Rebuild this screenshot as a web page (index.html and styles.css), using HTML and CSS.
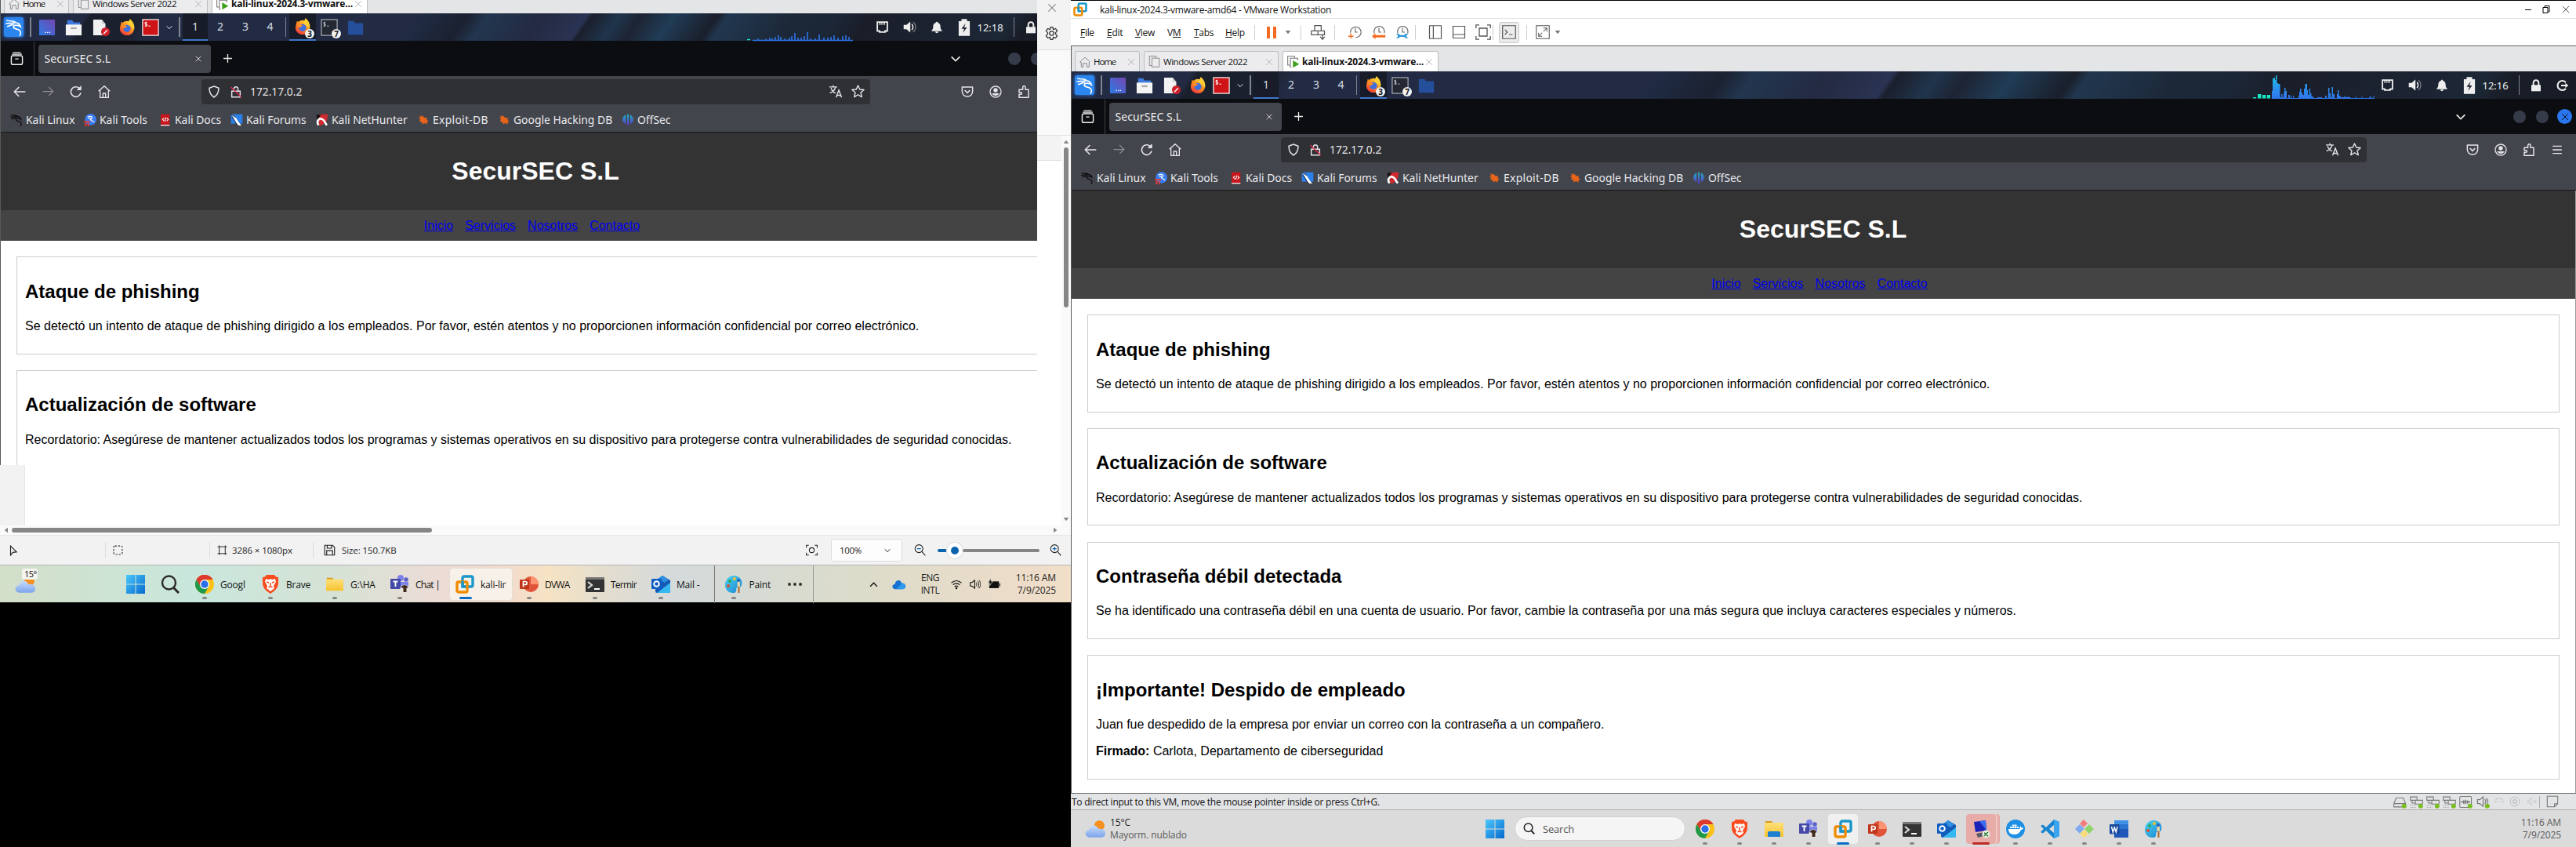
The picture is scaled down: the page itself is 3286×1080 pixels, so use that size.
FILE: index.html
```html
<!DOCTYPE html>
<html lang="es">
<head>
<meta charset="utf-8">
<title>SecurSEC S.L</title>
<link rel="stylesheet" href="styles.css">
</head>
<body>
<svg class="defs" width="0" height="0">
  <defs>
    <linearGradient id="gBlue" x1="0" y1="0" x2="1" y2="1"><stop offset="0" stop-color="#4cc8fb"/><stop offset="1" stop-color="#0669cf"/></linearGradient>
    <linearGradient id="gDesk" x1="0" y1="1" x2="1" y2="0"><stop offset="0" stop-color="#2c7be5"/><stop offset="1" stop-color="#7446b0"/></linearGradient>
    <linearGradient id="gFox" x1="0.8" y1="0" x2="0.2" y2="1"><stop offset="0" stop-color="#ffd93b"/><stop offset=".5" stop-color="#ff8a1e"/><stop offset="1" stop-color="#f0303f"/></linearGradient>
    <linearGradient id="gLoad" x1="0" y1="0" x2="0" y2="35" gradientUnits="userSpaceOnUse"><stop offset="0" stop-color="#17d0e0"/><stop offset=".6" stop-color="#2a93f0"/><stop offset="1" stop-color="#2f74e8"/></linearGradient>
    <linearGradient id="gOff" x1="0" y1="0" x2="0" y2="1"><stop offset="0" stop-color="#1fb0c4"/><stop offset="1" stop-color="#5b33c9"/></linearGradient>
    <linearGradient id="gCloud" x1="0" y1="0" x2="0" y2="1"><stop offset="0" stop-color="#c9dcfb"/><stop offset="1" stop-color="#7ba4ec"/></linearGradient>
    <linearGradient id="gFold" x1="0" y1="0" x2="0" y2="1"><stop offset="0" stop-color="#ffe07a"/><stop offset="1" stop-color="#f7c22e"/></linearGradient>
    <linearGradient id="gPal" x1="0" y1="0" x2="1" y2="1"><stop offset="0" stop-color="#4fd3f3"/><stop offset="1" stop-color="#1583cf"/></linearGradient>
  </defs>
  <symbol id="dragon" viewBox="0 0 24 24"><path d="M2 2.500c4 1 7 0 11 1.500M1 6.500c4 0 7-1 11-.5M3 10.500c3-1 5-2.500 8-2.500M12 5c5 0 8 2 9 6-4-3-10-3-10 .5 0 3.500 7 1.500 9.500 5.500 1 2 .5 4-.5 6" fill="none" stroke="currentColor" stroke-width="1.800" stroke-linecap="round"/></symbol>
  <symbol id="desk" viewBox="0 0 24 24"><rect x="1" y="1" width="22" height="22" rx="1" fill="url(#gDesk)"/><path d="M9 19h1.500M12 19h1.500M15 19h1.500" stroke="#fff" stroke-width="1.500"/></symbol>
  <symbol id="files" viewBox="0 0 24 24"><path d="M3 2h7l2 3h9v7H3z" fill="#3f7ae0"/><path d="M1 8h22v15H1z" fill="#f4f4f4"/><path d="M8 13h8" stroke="#aaa" stroke-width="2.500"/></symbol>
  <symbol id="doc" viewBox="0 0 24 24"><path d="M1 1h12l5 6v16H1z" fill="#f2f2f2"/><path d="M13 1l5 6h-5z" fill="#ccc"/><circle cx="18" cy="18" r="6" fill="#d0202a"/><path d="M15.500 21l5-5.500" stroke="#fff" stroke-width="1.500"/></symbol>
  <symbol id="fox" viewBox="0 0 24 24"><circle cx="12" cy="13" r="10" fill="url(#gFox)"/><path d="M13 7l3-7c5 4 7 9 6 15l-5-5z" fill="#ffcf35"/><path d="M3 10l1-6 5 4z" fill="#ff8a1e"/><circle cx="12" cy="13.500" r="5" fill="#3c6fe0"/><path d="M4 10c3-2 6-1 9 1-3 0-3 3-6 2z" fill="#ff8a2a"/></symbol>
  <symbol id="rterm" viewBox="0 0 24 24"><rect x="1" y="1" width="22" height="22" fill="#cf1417" stroke="#eee" stroke-width="1.400"/><path d="M7 5H4.500v2.500H7V10H4M5.700 4v7M9 10h3" stroke="#fff" fill="none"/></symbol>
  <symbol id="bterm" viewBox="0 0 24 24"><rect x="1" y="1" width="22" height="22" fill="#232832" stroke="#b5b9c2" stroke-width="1.200"/><path d="M6.500 5H4.500v2.500h2V10H4M5.500 4v7M9 10h2.500" stroke="#c8ccd4" fill="none"/></symbol>
  <symbol id="bfold" viewBox="0 0 24 24"><path d="M1 3h8l2 3h11v16H1z" fill="#254f9b"/></symbol>
  <symbol id="down" viewBox="0 0 24 24"><path d="M4 8l8 8 8-8" fill="none" stroke="currentColor" stroke-width="2.400"/></symbol>
  <symbol id="up" viewBox="0 0 24 24"><path d="M4 16l8-8 8 8" fill="none" stroke="currentColor" stroke-width="2.600"/></symbol>
  <symbol id="x" viewBox="0 0 24 24"><path d="M4 4l16 16M20 4L4 20" fill="none" stroke="currentColor" stroke-width="2"/></symbol>
  <symbol id="plus" viewBox="0 0 24 24"><path d="M12 2v20M2 12h20" stroke="currentColor" stroke-width="2.400"/></symbol>
  <symbol id="eth" viewBox="0 0 24 24"><path d="M3 3h18v16h-4v2H7v-2H3z" fill="none" stroke="currentColor" stroke-width="2.600"/><path d="M7 4v4M10 4v4M13 4v4M16 4v4" stroke="currentColor" stroke-width="1.600"/></symbol>
  <symbol id="vol" viewBox="0 0 24 24"><path d="M1 8h5l7-6v20l-7-6H1z" fill="currentColor"/><path d="M15.500 7c3 2 3 8 0 10" fill="none" stroke="currentColor" stroke-width="2.200"/><path d="M18 3c6 4 6 14 0 18" fill="none" stroke="currentColor" stroke-opacity=".4" stroke-width="2"/></symbol>
  <symbol id="bell" viewBox="0 0 24 24"><path d="M12 1c-1.500 0-2 1-2 2-4 1-5 4-5 8 0 4-1 5-3 7v1h20v-1c-2-2-3-3-3-7 0-4-1-7-5-8 0-1-.5-2-2-2zM9 20h6c0 4-6 4-6 0z" fill="currentColor"/></symbol>
  <symbol id="batt" viewBox="0 0 18 24"><path d="M5 0h8v3h4v21H1V3h4z" fill="currentColor"/><path d="M11 6l-6 8h4l-2 6 6-8H9z" fill="#1e2430"/></symbol>
  <symbol id="lock" viewBox="0 0 24 24"><path d="M3 11h18v12H3z" fill="currentColor"/><path d="M7 12V8c0-8 10-8 10 0v4" fill="none" stroke="currentColor" stroke-width="3"/></symbol>
  <symbol id="out" viewBox="0 0 24 24"><path d="M18 6a9 9 0 1 0 0 12" fill="none" stroke="currentColor" stroke-width="3.200"/><path d="M9 10.500h8V7l6 5-6 5v-3.500H9z" fill="currentColor"/></symbol>
  <symbol id="recent" viewBox="0 0 24 24"><rect x="2" y="7" width="20" height="16" rx="3" fill="none" stroke="currentColor" stroke-width="2"/><path d="M5 1.500h14M3 4.500h18M9 13h6" stroke="currentColor" stroke-width="1.800" fill="none"/></symbol>
  <symbol id="back" viewBox="0 0 24 24"><path d="M23 12H2M11 3l-9 9 9 9" fill="none" stroke="currentColor" stroke-width="2.300"/></symbol>
  <symbol id="fwd" viewBox="0 0 24 24"><path d="M1 12h21M13 3l9 9-9 9" fill="none" stroke="currentColor" stroke-width="2"/></symbol>
  <symbol id="reload" viewBox="0 0 24 24"><path d="M21 14a9.500 9.500 0 1 1-3-9" fill="none" stroke="currentColor" stroke-width="2.400"/><path d="M22 0v9h-9z" fill="currentColor"/></symbol>
  <symbol id="home" viewBox="0 0 24 24"><path d="M1 11L12 1l11 10M4 9v14h16V9M9.500 23v-8h5v8" fill="none" stroke="currentColor" stroke-width="2"/></symbol>
  <symbol id="shield" viewBox="0 0 24 24"><path d="M12 1.500l9 3.500c0 9-3 14-9 17.500C6 19 3 14 3 5z" fill="none" stroke="currentColor" stroke-width="2.200"/></symbol>
  <symbol id="nolock" viewBox="0 0 24 24"><path d="M4 11h16v11H4zM8 11V7c0-6 8-6 8 0v4" fill="none" stroke="currentColor" stroke-width="2.200"/><path d="M2 3l20 19" stroke="#e22850" stroke-width="2.200"/></symbol>
  <symbol id="trans" viewBox="0 0 24 24"><path d="M0 4h14M7 1v3M11 4c-1 5-5 9-10 11M3 6c1 4 5 8 8 9M12 23l5-13 5 13M13.500 19h7" fill="none" stroke="currentColor" stroke-width="2"/></symbol>
  <symbol id="star" viewBox="0 0 24 24"><path d="M12 1.500l3.200 7 7.500.7-5.700 5 1.700 7.800-6.700-4-6.700 4 1.700-7.800-5.700-5 7.500-.7z" fill="none" stroke="currentColor" stroke-width="2" stroke-linejoin="round"/></symbol>
  <symbol id="pocket" viewBox="0 0 24 24"><path d="M2 3h20v8c0 6-4 10-10 10S2 17 2 11z" fill="none" stroke="currentColor" stroke-width="2.200" stroke-linejoin="round"/><path d="M7 9l5 5 5-5" fill="none" stroke="currentColor" stroke-width="2.400"/></symbol>
  <symbol id="acct" viewBox="0 0 24 24"><circle cx="12" cy="12" r="10.500" fill="none" stroke="currentColor" stroke-width="2"/><circle cx="12" cy="9" r="4" fill="currentColor"/><path d="M5 15h14c-2 6-12 6-14 0z" fill="currentColor"/></symbol>
  <symbol id="ext" viewBox="0 0 24 24"><path d="M3 8h7V4c0-4 5-4 5 0v4h6v15H3v-6h3c3 0 3-4 0-4H3z" fill="none" stroke="currentColor" stroke-width="2.200" stroke-linejoin="round"/></symbol>
  <symbol id="menu" viewBox="0 0 24 24"><path d="M2 4h20M2 12h20M2 20h20" stroke="currentColor" stroke-width="2.300"/></symbol>
  <symbol id="tools" viewBox="0 0 24 24"><circle cx="13" cy="11" r="11" fill="#3a7df0"/><path d="M7 6c9-3 11 2 7 4s2 3 6 6M8 9c3-1 5 0 5 2" stroke="#fff" stroke-width="1.800" fill="none"/><path d="M0 14h12v3H0zM2 18h3v6H2zM7 18h3v6H7z" fill="#e43b3b"/></symbol>
  <symbol id="docs" viewBox="0 0 24 24"><path d="M3 1h17v22H3z" fill="#c8161d"/><path d="M3 21h17v2H3z" fill="#eee"/><path d="M9.500 8l-3 3 3 3M14.500 8l3 3-3 3M13 7l-2 8" stroke="#fff" stroke-width="1.600" fill="none"/></symbol>
  <symbol id="forum" viewBox="0 0 24 24"><path d="M1 1h22v18H1z" fill="#2a80e8"/><path d="M2 1l8 6 5 8 6 8-6-1-5-6z" fill="#fff"/><path d="M1 1l9 6M3 6l6 9 3 6" stroke="#111" stroke-width="1.300" fill="none"/></symbol>
  <symbol id="hunter" viewBox="0 0 24 24"><path d="M5 1h18l-2 12-9 9H6z" fill="#d02a30"/><path d="M1 2h9L2 12z" fill="#111"/><path d="M5 22c-5-8 1-15 8-11 4 2 4 7 8 11" stroke="#fff" stroke-width="4" fill="none"/></symbol>
  <symbol id="bug" viewBox="0 0 24 24"><path d="M3 3l5 3 1-3 4 5 7 1-2 3 4 4-4 1 1 5-5-3-5 2-1-4-5-2 2-4-4-2 4-1z" fill="#e8641b"/></symbol>
  <symbol id="offsec" viewBox="0 0 24 24"><path d="M8 2v18C0 16-1 7 8 2zM10.500 1h3v22h-3zM16 2v18c8-4 9-13 0-18z" fill="url(#gOff)"/></symbol>
  <symbol id="hometab" viewBox="0 0 24 24"><path d="M1 12L12 2l11 10-2 1v10h-5v-8H8v8H4V13z" fill="none" stroke="currentColor" stroke-width="1.700"/></symbol>
  <symbol id="vmtab" viewBox="0 0 24 24"><path d="M6 20H2V1h14v3M7 5h15v18H7z" fill="none" stroke="currentColor" stroke-width="1.600"/></symbol>
  <symbol id="vmon" viewBox="0 0 24 24"><path d="M5 18H1V1h13v3M8 22H6V5h14v4" fill="none" stroke="#777" stroke-width="1.600"/><path d="M11 9v14l12-7z" fill="#3fa01c"/></symbol>
  <symbol id="vmware" viewBox="0 0 24 24"><rect x="9" y="2" width="13" height="13" rx="2" fill="none" stroke="#1a97c9" stroke-width="3.400"/><rect x="2" y="9" width="13" height="13" rx="2" fill="none" stroke="#f08c00" stroke-width="3.400"/><path d="M9 8v7h4" fill="none" stroke="#1a97c9" stroke-width="3.400"/></symbol>
  <symbol id="win" viewBox="0 0 24 24"><path d="M0 0h11.500v11.500H0zM12.500 0H24v11.500H12.500zM0 12.500h11.500V24H0zM12.500 12.500H24V24H12.500z" fill="url(#gBlue)"/></symbol>
  <symbol id="mag" viewBox="0 0 24 24"><circle cx="10.500" cy="10" r="8.500" fill="none" stroke="currentColor" stroke-width="2.400"/><path d="M16.500 16.500L23 23" stroke="currentColor" stroke-width="3"/></symbol>
  <symbol id="chrome" viewBox="0 0 24 24"><circle cx="12" cy="12" r="12" fill="#fbc116"/><path d="M1.600 6A12 12 0 0 1 22.400 6H12z" fill="#dd3a2d"/><path d="M1.600 6l5.200 9L12 6h10.400C18-2 6-2 1.600 6z" fill="#dd3a2d"/><path d="M1.600 6A12 12 0 0 0 12 24l5.200-9H6.800z" fill="#1f9a4b"/><circle cx="12" cy="12" r="6" fill="#fff"/><circle cx="12" cy="12" r="4.700" fill="#2a6fe8"/></symbol>
  <symbol id="brave" viewBox="0 0 24 24"><path d="M7 0h10l2 2.500L22 3l0 7c0 7-5 11-10 14C7 21 2 17 2 10V3l3-.5z" fill="#fb4a1e"/><path d="M6 5l4 1 2-1 2 1 4-1 1 4-3 5 1 3-5 4-5-4 1-3-3-5z" fill="#fff"/><path d="M7 9l3 1M17 9l-3 1M12 10v5M9.500 16l2.500-1.500 2.500 1.500" stroke="#fb4a1e" stroke-width="1.500" fill="none"/></symbol>
  <symbol id="folder" viewBox="0 0 24 24"><path d="M1 3h8l2 3H1z" fill="#d79c16"/><path d="M0 5h24v16H0z" fill="url(#gFold)"/></symbol>
  <symbol id="explorer" viewBox="0 0 24 24"><path d="M1 2h8l2 3H1z" fill="#d79c16"/><path d="M0 4h24v18H0z" fill="url(#gFold)"/><path d="M4 22v-5c0-1 1-2 2-2h12c1 0 2 1 2 2v5z" fill="#1d7fd0"/></symbol>
  <symbol id="teams" viewBox="0 0 24 24"><circle cx="13" cy="4" r="4" fill="#7b83eb"/><circle cx="20" cy="6" r="2.800" fill="#5b62c9"/><path d="M10 9h13v7c0 4-4 6-8 5z" fill="#7b83eb"/><rect x="0" y="5" width="13" height="13" rx="1" fill="#4449a8"/><path d="M3.500 8.500h6M6.500 8.500V15" stroke="#fff" stroke-width="1.900"/><circle cx="18" cy="18" r="5.500" fill="#e9e3de"/><path d="M13.500 16c2-4 7-4 9 0l-2 1v5h-4v-5z" fill="#40291d"/></symbol>
  <symbol id="ppt" viewBox="0 0 24 24"><circle cx="14" cy="12" r="10" fill="#e0553a"/><path d="M14 2a10 10 0 0 1 10 10H14z" fill="#ff9472"/><rect x="0" y="6" width="12" height="12" rx="1" fill="#c0361b"/><path d="M4.500 15.500V8.500h2.500c3 0 3 4 0 4H4.500" fill="none" stroke="#fff" stroke-width="1.700"/></symbol>
  <symbol id="term" viewBox="0 0 24 24"><rect y="3" width="24" height="19" rx="1" fill="#333"/><path d="M0 3h24v3H0z" fill="#777"/><path d="M3 9l5 4-5 4" fill="none" stroke="#ddd" stroke-width="2.200"/><path d="M11 18h7" stroke="#fff" stroke-width="2"/></symbol>
  <symbol id="outlook" viewBox="0 0 24 24"><path d="M5 8l9-7 10 6v14c0 1-1 2-2 2H7c-1 0-2-1-2-2z" fill="#1459b3"/><path d="M7 23l17-13v11c0 1-1 2-2 2z" fill="#35b8f1"/><path d="M8 5l9 5 5-4-8-5z" fill="#2f8fe0"/><rect x="0" y="5" width="13" height="13" rx="1" fill="#0f5ec4"/><circle cx="6.500" cy="11.500" r="3.300" fill="none" stroke="#fff" stroke-width="1.900"/></symbol>
  <symbol id="paint" viewBox="0 0 24 24"><path d="M12 1c7 0 12 5 10 12-1 4-4 2-6 3-2 2 1 5-3 7C5 24 0 18 1 11 2 5 7 1 12 1z" fill="url(#gPal)"/><circle cx="7" cy="8" r="2" fill="#2da84f"/><circle cx="13" cy="5" r="2" fill="#f4c12b"/><circle cx="5" cy="14" r="2" fill="#d9502e"/><circle cx="18" cy="7" r="1.800" fill="#3155b5"/><path d="M16.500 9h3.500v6h-3.500z" fill="#e8d2a6"/><path d="M17.500 15h2v8h-2z" fill="#a8662a"/></symbol>
  <symbol id="vbox" viewBox="0 0 24 24"><path d="M3 3l15-2 1 13-14 2z" fill="#1a22b8"/><path d="M10 2l8-1 1 13z" fill="#3d6df0"/><path d="M6 18l10-2 3 4-11 3z" fill="#555a66"/><circle cx="18.500" cy="18.500" r="5" fill="#e6efe4"/><path d="M16 21l5-5M16 17l2 1M19 20l2 1" stroke="#2e7d32" stroke-width="1.500"/></symbol>
  <symbol id="docker" viewBox="0 0 24 24"><circle cx="12" cy="12" r="12" fill="#1d8fe4"/><path d="M3 12h14c1-1 .5-3 1-4 1 1 1.500 2 1.500 2.500H22c0 2-2 2.500-3 2.500-2 5-5 6-9 6-5 0-7-3-7-7zM5 9h2.500v2H5zM8 9h2.500v2H8zM11 9h2.500v2H11zM14 9h2v2h-2zM8 6.500h2.500v2H8zM11 6.500h2.500v2H11z" fill="#fff"/></symbol>
  <symbol id="code" viewBox="0 0 24 24"><path d="M17 0l7 3v18l-7 3L7 14l-4 3.500L0 16l4-4-4-4 3-1.500L7 10zM17 7l-6 5 6 5z" fill="#1583cf" fill-rule="evenodd"/><path d="M17 0l7 3v18l-7 3z" fill="#3aa5ee"/></symbol>
  <symbol id="git" viewBox="0 0 24 24"><path d="M11 0l5 5-5 5-5-5z" fill="#f27b7b"/><path d="M18 6l6 6-6 6-6-6z" fill="#8fd468"/><path d="M6 6l5.500 5.500L6 18l-6-6z" fill="#7fa9ee"/><path d="M12 13l5 5-5 6-6-6z" fill="#f7dc7c"/></symbol>
  <symbol id="word" viewBox="0 0 24 24"><path d="M6 1h18v22H6z" fill="#1f56b8"/><path d="M6 1h18v5.500H6z" fill="#3f92e6"/><path d="M6 6.500h18V12H6z" fill="#2a75d0"/><rect x="0" y="6" width="12.500" height="12.500" rx="1" fill="#174a9c"/><path d="M2.500 9l1.800 7L6.300 10l2 6L10 9" fill="none" stroke="#fff" stroke-width="1.500"/></symbol>
  <symbol id="weather" viewBox="0 0 24 24"><circle cx="17" cy="8" r="6" fill="#f68f1e"/><path d="M6 22c-7 0-7-8-1-9 1-6 9-7 11-1 4-1 8 1 8 5 0 3-2 5-5 5z" fill="url(#gCloud)"/></symbol>
  <symbol id="cloud" viewBox="0 0 24 24"><path d="M5 20c-6-1-6-8 0-9C6 3 15 2 17 9c6 0 8 4 7 8-1 2-3 3-5 3z" fill="#1672d0"/><path d="M8 20l10-11c6 0 8 11 1 11z" fill="#2f9bef"/></symbol>
  <symbol id="wifi" viewBox="0 0 24 24"><path d="M1 9c7-6 15-6 22 0M4.500 13c5-4 10-4 15 0M8 17c3-2 5-2 8 0" fill="none" stroke="currentColor" stroke-width="2"/><circle cx="12" cy="20.500" r="2.200" fill="currentColor"/></symbol>
  <symbol id="snd" viewBox="0 0 24 24"><path d="M1 8h4l6-5v18l-6-5H1z" fill="none" stroke="currentColor" stroke-width="1.800"/><path d="M14 8c2 2 2 6 0 8M17 5c4 4 4 10 0 14M20 3c5 5 5 13 0 18" fill="none" stroke="currentColor" stroke-width="1.600"/></symbol>
  <symbol id="wbat" viewBox="0 0 26 24"><path d="M3 6h20v14H3z" fill="currentColor"/><path d="M24 10h2v6h-2z" fill="currentColor"/><path d="M6 0L1 9h4l-1 6 7-9H7z" fill="currentColor" stroke="#e4e0d4" stroke-width="1"/></symbol>
  <symbol id="gear" viewBox="0 0 24 24"><path d="M10 1h4l1 4 4-1.500 3 4-3 3.500v2l3 3.500-3 4-4-1.500-1 4h-4l-1-4-4 1.500-3-4L5 13v-2L2 7.500l3-4L9 5z" fill="none" stroke="currentColor" stroke-width="1.800"/><circle cx="12" cy="12" r="3.800" fill="none" stroke="currentColor" stroke-width="1.800"/></symbol>
  <symbol id="cursor" viewBox="0 0 24 24"><path d="M6 2v20l5-6 8-1z" fill="none" stroke="currentColor" stroke-width="2"/></symbol>
  <symbol id="dash" viewBox="0 0 24 24"><rect x="2" y="2" width="20" height="20" rx="3" fill="none" stroke="currentColor" stroke-width="2" stroke-dasharray="4 3.500"/></symbol>
  <symbol id="crop" viewBox="0 0 24 24"><path d="M5 1v22M19 1v22M1 4h22M1 20h22" fill="none" stroke="currentColor" stroke-width="1.800"/></symbol>
  <symbol id="save" viewBox="0 0 24 24"><path d="M2 2h16l4 4v16H2zM7 2v6h9V2M6 22v-9h12v9" fill="none" stroke="currentColor" stroke-width="1.800"/></symbol>
  <symbol id="focus" viewBox="0 0 24 24"><path d="M1 7V2h5M18 2h5v5M23 17v5h-5M6 22H1v-5" fill="none" stroke="currentColor" stroke-width="1.700"/><circle cx="12" cy="12" r="5" fill="none" stroke="currentColor" stroke-width="1.700"/></symbol>
  <symbol id="zout" viewBox="0 0 24 24"><circle cx="10" cy="9" r="8" fill="none" stroke="currentColor" stroke-width="1.700"/><path d="M16 15l7 8" stroke="currentColor" stroke-width="1.700"/><path d="M6 9h8" stroke="#0a64ad" stroke-width="2"/></symbol>
  <symbol id="zin" viewBox="0 0 24 24"><circle cx="10" cy="9" r="8" fill="none" stroke="currentColor" stroke-width="1.700"/><path d="M16 15l7 8" stroke="currentColor" stroke-width="1.700"/><path d="M6 9h8M10 5v8" stroke="#0a64ad" stroke-width="2"/></symbol>
  <symbol id="send" viewBox="0 0 24 24"><path d="M6 2h10v8H6zM1 10h20v6H1zM11 10v6M18 15v7M14.500 19l3.500 4 3.500-4" fill="none" stroke="currentColor" stroke-width="1.500"/></symbol>
  <symbol id="clk1" viewBox="0 0 24 24"><path d="M5 13a9 9 0 1 1 9 8M13 5v7h4" fill="none" stroke="#666" stroke-width="1.500"/><path d="M1 19h9M5.500 14v9" stroke="#f26b21" stroke-width="1.800"/></symbol>
  <symbol id="clk2" viewBox="0 0 24 24"><path d="M4 14a9 9 0 1 1 17 0M12 5v7h4" fill="none" stroke="#666" stroke-width="1.500"/><path d="M0 19l6-5v3h17v4H6v3z" fill="#f26b21"/></symbol>
  <symbol id="clk3" viewBox="0 0 24 24"><path d="M4 14a9 9 0 1 1 17 0M12 5v7h4" fill="none" stroke="#666" stroke-width="1.500"/><path d="M1 15c4-1 6 0 7 2h7c2-3 5-3 7-2l-3 2v3l3 2c-3 1-5 0-7-2H8c-2 2-4 3-7 2l3-2v-3z" fill="#2b97d6"/></symbol>
  <symbol id="pside" viewBox="0 0 24 24"><path d="M2 1h20v22H2zM8.500 1v22" fill="none" stroke="currentColor" stroke-width="1.600"/></symbol>
  <symbol id="pbot" viewBox="0 0 24 24"><path d="M2 2h20v20H2zM2 16h20" fill="none" stroke="currentColor" stroke-width="1.600"/></symbol>
  <symbol id="full" viewBox="0 0 24 24"><path d="M1 6V1h5M18 1h5v5M23 18v5h-5M6 23H1v-5M6 6h12v12H6z" fill="none" stroke="currentColor" stroke-width="1.600"/></symbol>
  <symbol id="cons" viewBox="0 0 24 24"><path d="M1 1h22v22H1zM5 8l4 4-4 4M12 16h6" fill="none" stroke="currentColor" stroke-width="1.600"/></symbol>
  <symbol id="stretch" viewBox="0 0 24 24"><path d="M1 1h22v22H1zM13 5h6v6M19 5l-6 6M5 13v6h6M5 19l6-6" fill="none" stroke="currentColor" stroke-width="1.400"/></symbol>
  <symbol id="caret" viewBox="0 0 24 24"><path d="M2 6h20L12 19z" fill="currentColor"/></symbol>
  <symbol id="min" viewBox="0 0 10 10"><path d="M1 5.500h8" stroke="#000"/></symbol>
  <symbol id="restore" viewBox="0 0 10 10"><path d="M1 2.500h6v7H1zM3 2V.5h6V8H7.500" fill="none" stroke="#000"/></symbol>
  <symbol id="disk" viewBox="0 0 24 24"><path d="M5 5h13l4 10v6H1v-6zM1 15h21" fill="none" stroke="currentColor" stroke-width="1.500"/><circle cx="19.500" cy="19.500" r="4.300" fill="#79bd22"/></symbol>
  <symbol id="net" viewBox="0 0 24 24"><path d="M1 3h12v6H1zM10 9h13v7H10zM4 9v5h6" fill="none" stroke="currentColor" stroke-width="1.500"/><path d="M1 18h10M1 22h10" stroke="currentColor" stroke-dasharray="1.500 1.500"/><circle cx="19.500" cy="19.500" r="4.300" fill="#79bd22"/></symbol>
  <symbol id="usb" viewBox="0 0 24 24"><rect x="1" y="2" width="21" height="20" rx="2" fill="none" stroke="currentColor" stroke-width="1.500"/><path d="M3 12h17M8 9v6M11 8v8M15 9v6" stroke="currentColor" stroke-width="2"/><circle cx="19.500" cy="19.500" r="4.300" fill="#79bd22"/></symbol>
  <symbol id="vsnd" viewBox="0 0 24 24"><path d="M2 8h4l6-5v17l-6-5H2zM15 7c2 2 2 6 0 9M18 5c3 4 3 8 1 10" fill="none" stroke="currentColor" stroke-width="1.700"/><circle cx="19.500" cy="19.500" r="4.300" fill="#79bd22"/></symbol>
  <symbol id="cd" viewBox="0 0 24 24"><circle cx="12" cy="12" r="10" fill="none" stroke="currentColor" stroke-width="1.500"/><circle cx="12" cy="12" r="4" fill="none" stroke="currentColor" stroke-width="2"/></symbol>
  <symbol id="prn" viewBox="0 0 24 24"><path d="M3 9c5-5 13-5 18 0M2 14l5-2M22 14l-5-2M11 12h2" fill="none" stroke="currentColor" stroke-width="1.600"/></symbol>
  <symbol id="cam" viewBox="0 0 24 24"><path d="M15 4L3 12l12 8M19 8v8M22 10v4M9 12h5" fill="none" stroke="currentColor" stroke-width="1.600"/></symbol>
  <symbol id="note" viewBox="0 0 24 24"><path d="M2 2h20v14l-6 6H2zM16 22v-6h6" fill="none" stroke="currentColor" stroke-width="1.600"/></symbol>
</svg>

<main class="screens">
  <section class="paint">
    <div class="paint-body">
      <div class="canvas">
        <div class="clip">
          <div class="vm vm-a">
            <div class="vmtabs">
              <div class="vt vt1"><svg class="s14"><use href="#hometab"/></svg><span>Home</span><svg class="s12"><use href="#x"/></svg></div>
              <div class="vt vt2"><svg class="s15"><use href="#vmtab"/></svg><span>Windows Server 2022</span><svg class="s12"><use href="#x"/></svg></div>
              <div class="vt vt3"><svg class="s16"><use href="#vmon"/></svg><span>kali-linux-2024.3-vmware...</span><svg class="s12"><use href="#x"/></svg></div>
            </div>
            <div class="panel">
              <i class="kali"><svg class="s22"><use href="#dragon"/></svg></i><b class="bar"></b><svg class="s22"><use href="#desk"/></svg><svg class="s22"><use href="#files"/></svg><svg class="s22"><use href="#doc"/></svg><svg class="s22"><use href="#fox"/></svg><svg class="s22"><use href="#rterm"/></svg><svg class="s10"><use href="#down"/></svg><b class="bar"></b>
              <span class="ws on">1</span><span class="ws">2</span><span class="ws">3</span><span class="ws">4</span><b class="bar"></b>
              <span class="task on"><svg class="s22"><use href="#fox"/></svg><em>3</em></span><span class="task"><svg class="s22"><use href="#bterm"/></svg><em>7</em></span><svg class="s22"><use href="#bfold"/></svg><span></span>
              <svg class="graph" viewBox="0 0 155 35"><path d="M0 33.500h4" stroke="#19e3c3" stroke-width="1.500"/><path d="M7 34.500h128M14 34v-2M24 34v-1.500M29 34v-3M32 34v-2M36 34v-4M40 34v-6M43 34v-4M48 34v-2M54 34v-3M57 34v-5M61 34v-9M65 34v-3M69 34v-3M73 34v-5M77 34v-10M81 34v-2M87 34v-2M92 34v-7M98 34v-3M103 34v-3M107 34v-4M111 34v-6M116 34v-3M122 34v-5M126 34v-6M130 34v-4" stroke="#2f74e8" stroke-width="1.600"/></svg>
              <svg class="s17"><use href="#eth"/></svg><svg class="s17"><use href="#vol"/></svg><svg class="s16"><use href="#bell"/></svg><svg class="bat"><use href="#batt"/></svg><span class="clock">12:18</span><b class="bar"></b><svg class="s16"><use href="#lock"/></svg><svg class="s16"><use href="#out"/></svg>
            </div>
            <div class="tabbar">
              <svg class="s17"><use href="#recent"/></svg><b class="vline"></b><i></i>
              <div class="ftab"><span>SecurSEC S.L</span><svg class="s10"><use href="#x"/></svg></div>
              <svg class="s13"><use href="#plus"/></svg><i></i><svg class="s16"><use href="#down"/></svg><i></i><b class="dot"></b><b class="dot"></b><b class="dot blue"><svg class="s12"><use href="#x"/></svg></b>
            </div>
            <div class="toolbar">
              <svg class="s16"><use href="#back"/></svg><svg class="s15 dim"><use href="#fwd"/></svg><svg class="s16"><use href="#reload"/></svg><svg class="s16"><use href="#home"/></svg><i></i>
              <div class="url"><svg class="s16"><use href="#shield"/></svg><svg class="s16"><use href="#nolock"/></svg><span>172.17.0.2</span><i></i><svg class="s17"><use href="#trans"/></svg><svg class="s17"><use href="#star"/></svg></div>
              <i></i><svg class="s16"><use href="#pocket"/></svg><svg class="s16"><use href="#acct"/></svg><svg class="s16"><use href="#ext"/></svg><svg class="s14"><use href="#menu"/></svg>
            </div>
            <div class="marks">
              <span><svg class="s16 blk"><use href="#dragon"/></svg><a>Kali Linux</a></span><span><svg class="s16"><use href="#tools"/></svg><a>Kali Tools</a></span><span><svg class="s16"><use href="#docs"/></svg><a>Kali Docs</a></span><span><svg class="s16"><use href="#forum"/></svg><a>Kali Forums</a></span><span><svg class="s16"><use href="#hunter"/></svg><a>Kali NetHunter</a></span><span><svg class="s15"><use href="#bug"/></svg><a class="wide">Exploit-DB</a></span><span><svg class="s15"><use href="#bug"/></svg><a>Google Hacking DB</a></span><span><svg class="s16"><use href="#offsec"/></svg><a>OffSec</a></span>
            </div>
            <div class="site">
              <header><h1>SecurSEC S.L</h1></header>
              <nav><a href="#">Inicio</a><a href="#">Servicios</a><a href="#">Nosotros</a><a href="#">Contacto</a></nav>
              <article><h2>Ataque de phishing</h2><p>Se detectó un intento de ataque de phishing dirigido a los empleados. Por favor, estén atentos y no proporcionen información confidencial por correo electrónico.</p></article>
              <article><h2>Actualización de software</h2><p>Recordatorio: Asegúrese de mantener actualizados todos los programas y sistemas operativos en su dispositivo para protegerse contra vulnerabilidades de seguridad conocidas.</p></article>
            </div>
          </div>
        </div>
        <div class="below"></div>
      </div>
      <div class="edge">
        <div class="e1"><svg class="s14"><use href="#x"/></svg><svg class="s17"><use href="#gear"/></svg></div>
        <div class="e2"></div>
        <div class="e3"><div class="e4"></div><div class="vscroll"><svg class="s8"><use href="#caret"/></svg><b></b><svg class="s8"><use href="#caret"/></svg></div></div>
      </div>
    </div>
    <div class="hscroll"><svg class="s8 lt"><use href="#caret"/></svg><b></b><svg class="s8 rt"><use href="#caret"/></svg></div>
    <div class="status">
      <svg class="s14"><use href="#cursor"/></svg><b></b><svg class="s13"><use href="#dash"/></svg><b></b><svg class="s13"><use href="#crop"/></svg><span>3286 × 1080px</span><b></b><svg class="s15"><use href="#save"/></svg><span>Size: 150.7KB</span><i></i><svg class="s15"><use href="#focus"/></svg>
      <div class="zoom"><span>100%</span><svg class="s10"><use href="#down"/></svg></div>
      <svg class="s15"><use href="#zout"/></svg><div class="slider"><u></u><s></s><u></u></div><svg class="s15"><use href="#zin"/></svg>
    </div>
    <div class="bar1">
      <div class="wx"><svg class="s26"><use href="#weather"/></svg><em>15°</em></div>
      <svg class="s24"><use href="#win"/></svg><svg class="s24 dk"><use href="#mag"/></svg>
      <div class="app"><svg class="s24"><use href="#chrome"/></svg><span>Googl</span></div>
      <div class="app"><svg class="s24"><use href="#brave"/></svg><span>Brave</span></div>
      <div class="app"><svg class="s22"><use href="#folder"/></svg><span>G:\HA</span></div>
      <div class="app"><svg class="s24"><use href="#teams"/></svg><span class="tight">Chat |</span></div>
      <div class="app act"><svg class="s24"><use href="#vmware"/></svg><span>kali-lir</span></div>
      <div class="app"><svg class="s24"><use href="#ppt"/></svg><span class="tight">DVWA</span></div>
      <div class="app"><svg class="s24"><use href="#term"/></svg><span class="tight">Termir</span></div>
      <div class="app"><svg class="s24"><use href="#outlook"/></svg><span>Mail -</span></div>
      <div class="app lined"><svg class="s24"><use href="#paint"/></svg><span>Paint</span></div>
      <div class="dots"><b></b><b></b><b></b></div>
      <i></i><svg class="s13"><use href="#up"/></svg><svg class="s17"><use href="#cloud"/></svg><div class="two lang"><span>ENG</span><span>INTL</span></div><svg class="s14"><use href="#wifi"/></svg><svg class="s14"><use href="#snd"/></svg><svg class="s16"><use href="#wbat"/></svg><div class="two end"><span>11:16 AM</span><span>7/9/2025</span></div>
    </div>
    <div class="void"></div>
  </section>

  <section class="work">
    <div class="title"><svg class="s18"><use href="#vmware"/></svg><span>kali-linux-2024.3-vmware-amd64 - VMware Workstation</span><i></i><svg class="s10"><use href="#min"/></svg><svg class="s10"><use href="#restore"/></svg><svg class="s12 gx"><use href="#x"/></svg></div>
    <div class="menubar">
      <span><u>F</u>ile</span><span><u>E</u>dit</span><span><u>V</u>iew</span><span>V<u>M</u></span><span><u>T</u>abs</span><span><u>H</u>elp</span><b></b>
      <div class="pause"></div><svg class="s8 car"><use href="#caret"/></svg><b></b><svg class="s20"><use href="#send"/></svg><b></b><svg class="s18"><use href="#clk1"/></svg><svg class="s18"><use href="#clk2"/></svg><svg class="s18"><use href="#clk3"/></svg><b></b><svg class="s18"><use href="#pside"/></svg><svg class="s18"><use href="#pbot"/></svg><svg class="s20"><use href="#full"/></svg><b></b><div class="hl"><svg class="s18"><use href="#cons"/></svg></div><b></b><svg class="s18"><use href="#stretch"/></svg><svg class="s8 car"><use href="#caret"/></svg>
    </div>
    <div class="vm vm-b">
      <div class="vmtabs">
        <div class="vt vt1"><svg class="s14"><use href="#hometab"/></svg><span>Home</span><svg class="s12"><use href="#x"/></svg></div>
        <div class="vt vt2"><svg class="s15"><use href="#vmtab"/></svg><span>Windows Server 2022</span><svg class="s12"><use href="#x"/></svg></div>
        <div class="vt vt3"><svg class="s16"><use href="#vmon"/></svg><span>kali-linux-2024.3-vmware...</span><svg class="s12"><use href="#x"/></svg></div>
      </div>
      <div class="panel">
        <i class="kali"><svg class="s22"><use href="#dragon"/></svg></i><b class="bar"></b><svg class="s22"><use href="#desk"/></svg><svg class="s22"><use href="#files"/></svg><svg class="s22"><use href="#doc"/></svg><svg class="s22"><use href="#fox"/></svg><svg class="s22"><use href="#rterm"/></svg><svg class="s10"><use href="#down"/></svg><b class="bar"></b>
        <span class="ws on">1</span><span class="ws">2</span><span class="ws">3</span><span class="ws">4</span><b class="bar"></b>
        <span class="task on"><svg class="s22"><use href="#fox"/></svg><em>3</em></span><span class="task"><svg class="s22"><use href="#bterm"/></svg><em>7</em></span><svg class="s22"><use href="#bfold"/></svg><span></span>
        <svg class="graph" viewBox="0 0 155 35"><path d="M1 33h4v1.500H1zM7 29h4.500v5.500H7zM13 30h4.500v4.500H13zM19 30h4v4.500h-4z" fill="#19e3c3"/><path d="M25 35V25h1V9h1.500v-1H29v3h1V5h1.500v10H33v1h2.500v17H37v-4h1.500v4H40V27h1V21h1.500v4H44v9h2v-4h2v4h1v-3h1v3h2v-3h1v3h6v-3h1v-5h1v-4h1.500v4H63v2h1.500v2H66v-8h1.500v-6H70v8h1v6h1.500v-8H74v6h1.500v4H78v2h5v-1h6v1h4v-3h2v3h2V21h1.500v7h1.500v5h1.500V20h1.500v9h2v5h3v-5h1v-5h1.500v7h2v2h5v-2h1v2h3v-1h1v1h3v1h6v-2h1v2h7v-2h1v2h9v-2h2v2h3v-3h1v4z" fill="url(#gLoad)"/></svg>
        <svg class="s17"><use href="#eth"/></svg><svg class="s17"><use href="#vol"/></svg><svg class="s16"><use href="#bell"/></svg><svg class="bat"><use href="#batt"/></svg><span class="clock">12:16</span><b class="bar"></b><svg class="s16"><use href="#lock"/></svg><svg class="s16"><use href="#out"/></svg>
      </div>
      <div class="tabbar">
        <svg class="s17"><use href="#recent"/></svg><b class="vline"></b><i></i>
        <div class="ftab"><span>SecurSEC S.L</span><svg class="s10"><use href="#x"/></svg></div>
        <svg class="s13"><use href="#plus"/></svg><i></i><svg class="s16"><use href="#down"/></svg><i></i><b class="dot"></b><b class="dot"></b><b class="dot blue"><svg class="s12"><use href="#x"/></svg></b>
      </div>
      <div class="toolbar">
        <svg class="s16"><use href="#back"/></svg><svg class="s15 dim"><use href="#fwd"/></svg><svg class="s16"><use href="#reload"/></svg><svg class="s16"><use href="#home"/></svg><i></i>
        <div class="url"><svg class="s16"><use href="#shield"/></svg><svg class="s16"><use href="#nolock"/></svg><span>172.17.0.2</span><i></i><svg class="s17"><use href="#trans"/></svg><svg class="s17"><use href="#star"/></svg></div>
        <i></i><svg class="s16"><use href="#pocket"/></svg><svg class="s16"><use href="#acct"/></svg><svg class="s16"><use href="#ext"/></svg><svg class="s14"><use href="#menu"/></svg>
      </div>
      <div class="marks">
        <span><svg class="s16 blk"><use href="#dragon"/></svg><a>Kali Linux</a></span><span><svg class="s16"><use href="#tools"/></svg><a>Kali Tools</a></span><span><svg class="s16"><use href="#docs"/></svg><a>Kali Docs</a></span><span><svg class="s16"><use href="#forum"/></svg><a>Kali Forums</a></span><span><svg class="s16"><use href="#hunter"/></svg><a>Kali NetHunter</a></span><span><svg class="s15"><use href="#bug"/></svg><a class="wide">Exploit-DB</a></span><span><svg class="s15"><use href="#bug"/></svg><a>Google Hacking DB</a></span><span><svg class="s16"><use href="#offsec"/></svg><a>OffSec</a></span>
      </div>
      <div class="site">
        <header><h1>SecurSEC S.L</h1></header>
        <nav><a href="#">Inicio</a><a href="#">Servicios</a><a href="#">Nosotros</a><a href="#">Contacto</a></nav>
        <article><h2>Ataque de phishing</h2><p>Se detectó un intento de ataque de phishing dirigido a los empleados. Por favor, estén atentos y no proporcionen información confidencial por correo electrónico.</p></article>
        <article><h2>Actualización de software</h2><p>Recordatorio: Asegúrese de mantener actualizados todos los programas y sistemas operativos en su dispositivo para protegerse contra vulnerabilidades de seguridad conocidas.</p></article>
        <article><h2>Contraseña débil detectada</h2><p>Se ha identificado una contraseña débil en una cuenta de usuario. Por favor, cambie la contraseña por una más segura que incluya caracteres especiales y números.</p></article>
        <article><h2>¡Importante! Despido de empleado</h2><p>Juan fue despedido de la empresa por enviar un correo con la contraseña a un compañero.</p><p><strong>Firmado:</strong> Carlota, Departamento de ciberseguridad</p></article>
      </div>
    </div>
    <div class="vmstatus"><span>To direct input to this VM, move the mouse pointer inside or press Ctrl+G.</span><i></i><svg class="s17"><use href="#disk"/></svg><svg class="s17"><use href="#net"/></svg><svg class="s17"><use href="#net"/></svg><svg class="s17"><use href="#net"/></svg><svg class="s17"><use href="#usb"/></svg><svg class="s17"><use href="#vsnd"/></svg><svg class="s14 off"><use href="#prn"/></svg><svg class="s14 off"><use href="#cd"/></svg><svg class="s14 off"><use href="#cam"/></svg><b></b><svg class="s16"><use href="#note"/></svg></div>
    <div class="bar2">
      <svg class="s26"><use href="#weather"/></svg><div class="two st"><span>15°C</span><span class="g">Mayorm. nublado</span></div><i></i>
      <svg class="s24"><use href="#win"/></svg><div class="search"><svg class="s15"><use href="#mag"/></svg><span>Search</span></div>
      <div class="ico"><svg class="s24"><use href="#chrome"/></svg></div><div class="ico"><svg class="s24"><use href="#brave"/></svg></div><div class="ico"><svg class="s24"><use href="#explorer"/></svg></div><div class="ico"><svg class="s24"><use href="#teams"/></svg></div><div class="ico act"><svg class="s24"><use href="#vmware"/></svg></div><div class="ico"><svg class="s24"><use href="#ppt"/></svg></div><div class="ico"><svg class="s24"><use href="#term"/></svg></div><div class="ico"><svg class="s24"><use href="#outlook"/></svg></div><div class="ico red"><svg class="s24"><use href="#vbox"/></svg></div><div class="ico"><svg class="s24"><use href="#docker"/></svg></div><div class="ico"><svg class="s24"><use href="#code"/></svg></div><div class="ico"><svg class="s24"><use href="#git"/></svg></div><div class="ico"><svg class="s24"><use href="#word"/></svg></div><div class="ico"><svg class="s24"><use href="#paint"/></svg></div>
      <i></i><div class="two end g"><span>11:16 AM</span><span>7/9/2025</span></div>
    </div>
  </section>
</main>
</body>
</html>
```
FILE: styles.css
```css
* { box-sizing: border-box; }
body { margin: 0; width: 3286px; height: 1080px; overflow: hidden; background: #000; font: 12px "Open Sans", "Noto Sans", sans-serif; color: #111; }
i, em { font-style: normal; }
svg { display: block; flex: none; overflow: visible; }
.defs { position: absolute; }
.s8 { width: 8px; height: 8px; } .s10 { width: 10px; height: 10px; } .s12 { width: 12px; height: 12px; } .s13 { width: 13px; height: 13px; }
.s14 { width: 14px; height: 14px; } .s15 { width: 15px; height: 15px; } .s16 { width: 16px; height: 16px; } .s17 { width: 17px; height: 17px; }
.s18 { width: 18px; height: 18px; } .s20 { width: 20px; height: 20px; } .s22 { width: 22px; height: 22px; } .s24 { width: 24px; height: 24px; } .s26 { width: 26px; height: 26px; }
span, a { white-space: pre; }

.screens { display: grid; grid-template-columns: 1366px 1920px; grid-template-rows: 1080px; height: 1080px; }

/* Paint window and its taskbar */
.paint { display: flex; flex-direction: column; background: #000; overflow: hidden; }
.paint > div { flex: none; }
.paint-body { display: flex; height: 670px; background: #fff; }
.canvas { width: 1323px; }
.clip { width: 1323px; height: 593px; overflow: hidden; }
.below { width: 32px; height: 77px; background: #f2f2f2; border-right: 1px solid #e6e6e6; }
.edge { width: 43px; }
.e1 { height: 64px; background: #f3f3f3; border-bottom: 1px solid #e0e0e0; display: grid; grid-template-rows: 20px 44px; justify-items: center; align-items: center; padding-right: 6px; color: #333; }
.e1 .s14 { color: #888; }
.e2 { height: 109px; background: #f9f9f9; border-bottom: 1px solid #e3e3e3; }
.e3 { display: flex; height: 497px; }
.e4 { width: 31px; height: 32px; background: #f3f3f3; border-bottom: 1px solid #e0e0e0; }
.vscroll { width: 12px; background: #fafafa; display: flex; flex-direction: column; align-items: center; padding: 4px 0; color: #858585; }
.vscroll svg:first-child { transform: rotate(180deg); }
.vscroll b { width: 6px; height: 204px; margin-top: 3px; border-radius: 3px; background: #868686; }
.vscroll svg:last-child { margin-top: auto; }
.hscroll { height: 12px; background: #fafafa; display: flex; align-items: center; padding: 0 16px 0 4px; color: #858585; }
.hscroll b { width: 536px; height: 6px; border-radius: 3px; background: #868686; margin-left: 3px; }
.lt { transform: rotate(90deg); } .rt { transform: rotate(-90deg); margin-left: auto; }
.status { height: 38px; background: #f2f2f2; border-top: 1px solid #e6e6e6; display: grid; align-items: center; color: #222; font-size: 11.500px; letter-spacing: -.1px;
  grid-template-columns: 124px 10px 123px 10px 19px 103px 14px 23px 90px 1fr 32px 91px 45px 130px 40px; padding-left: 10px; }
.status > b { width: 1px; height: 21px; background: #dcdcdc; }
.zoom { height: 29px; background: #fdfdfd; border: 1px solid #dcdcdc; border-radius: 4px; display: flex; align-items: center; justify-content: space-between; padding: 0 13px 0 10px; letter-spacing: -.3px; }
.status > .s15:nth-last-child(3), .status > .s15:last-child { justify-self: center; }
.slider { display: grid; grid-template-columns: 12px 20px 98px; align-items: center; }
.slider u { height: 4px; background: #0a64ad; border-radius: 2px; }
.slider u:last-child { background: #858585; }
.slider s { width: 20px; height: 20px; border-radius: 50%; border: 5px solid #fff; background: #0a64ad; box-shadow: 0 0 0 1px #ddd; }
.bar1 { height: 48px; border-top: 1px solid #b5b5b5; display: grid; align-items: center;
  grid-template-columns: 156px 44px 48px 84px 82px 83px 81px 84px 84px 84px 80.500px 81.500px 46px 1fr 30px 36px 39px 24px 23px 26px 80px;
  background: linear-gradient(90deg, #d3dfc9 0, #c9e7dd 250px, #d6e2d5 430px, #ecdcd6 560px, #f3dccb 650px, #f6e3c4 700px, #e2ddd0 780px, #d5dadb 860px, #d6dad4 950px, #dcdcca 1100px, #ecdcc9 1300px, #f1dfc8); }
.wx { display: flex; padding-left: 19px; align-items: center; }
.wx em { margin: -26px 0 0 -17px; background: #f5f5ef; border-radius: 3px; font-size: 11px; line-height: 14px; padding: 0 1px 0 3px; letter-spacing: -.5px; }
.bar1 > .s24 { justify-self: start; margin-left: 5px; }
.dk { color: #2a2a2a; }
.app { position: relative; height: 40px; display: flex; align-items: center; gap: 8px; padding-left: 1px; letter-spacing: -.2px; }
.app:has(.s22) { padding-left: 2px; gap: 9px; }
.tight { letter-spacing: -.75px; }
.app::after, .ico::after { content: ""; position: absolute; left: 10px; bottom: 1px; width: 6px; height: 3px; border-radius: 2px; background: #878787; }
.app.act { background: #f8f1ea; border-radius: 4px; margin-left: -4px; margin-right: 9px; padding-left: 7px; box-shadow: 0 0 0 1px #e6ddd4; }
.app.act::after { left: 12px; width: 16px; background: #0a6fc4; }
.app.lined { height: 48px; border-left: 1px solid #777; padding-left: 12px; }
.app.lined::after { left: 21px; bottom: 5px; }
.dots { display: flex; gap: 3px; align-items: center; padding: 0 0 0 13px; height: 48px; border-right: 1px solid #999; }
.dots b { width: 4px; height: 4px; border-radius: 50%; background: #333; }
.two { display: flex; flex-direction: column; align-items: center; line-height: 16px; font-size: 12px; color: #1d1d1d; letter-spacing: -.1px; }
.lang { letter-spacing: -.4px; padding-right: 14px; }
.end { align-items: flex-end; padding-right: 19px; }

/* Guest machine: tabs, desktop panel, browser */
.vm { position: relative; --g: 117px; width: 1920px; background: #fff; }
.vm::before { content: ""; position: absolute; z-index: 2; left: 0; top: 0; bottom: 0; width: 1px; background: #5a5a5a; }
.vm-a { --g: 106px; width: 1366px; margin-top: -15px; }
.vmtabs { height: 32px; background: #e4e5e7; display: flex; align-items: flex-end; gap: 5px; padding-left: 5px; font-size: 11.500px; letter-spacing: -.45px; color: #111; }
.vt { height: 26px; display: grid; align-items: center; background: #ececee; border: 1px solid #bdbdbf; border-bottom: 0; border-radius: 3px 3px 0 0; }
.vt svg { color: #8a8a8a; } .vt svg:last-child { color: #b9b9b9; }
.vt1 { width: 83px; grid-template-columns: 18px 1fr 16px; padding-left: 5px; }
.vt1 span { letter-spacing: -1.100px; }
.vt2 { width: 172px; grid-template-columns: 19px 1fr 17px; padding-left: 5px; }
.vt3 { width: 199px; grid-template-columns: 19px 1fr 17px; padding-left: 5px; background: #fff; font-weight: 700; font-size: 12px; letter-spacing: -.2px; }
.panel { height: 35px; display: grid; align-items: center; justify-items: center; color: #eee; font: 14px "Noto Sans", sans-serif;
  grid-template-columns: 35px 8px 34px 34px 36px 30px 30px 18px 8px 32px 32px 32px 31px 9px 34px 34px 34px 1fr 155px 35px 35px 35px 34px 42.500px 9px 33px 35px;
  background: linear-gradient(125deg, transparent 8%, #1a1f2c 8.500%, #1c212f 13%, transparent 15%, transparent 38%, #1f2b42 39%, #1b2130 43%, #22364f 45%, #232a42 50%, #2a3353 54%, #1b1f2c 54.500%, #1f354c 57%, #1d2433 59%, #203c56 62%, #1a1f2b 66%, #21374f 67%, #1c2838 73%, #1b2636 77%, #1a1e29 80%, #1c2433 90%, #1c2836 93%, #191d27 95%), #222b43; }
.kali { width: 25px; height: 25px; border-radius: 3px; background: #2b85ee; color: #fff; display: grid; place-items: center; box-shadow: 0 0 4px #2f7fee; }
.bar { width: 1.500px; height: 25px; background: #7f858f; }
.ws { width: 100%; height: 35px; line-height: 33px; text-align: center; color: #dadde2; }
.on { background: #171c28; border-bottom: 2px solid #3f78cc; }
.task { position: relative; width: 100%; height: 35px; display: grid; place-items: center; }
.task em { position: absolute; right: 2px; bottom: 3px; width: 12px; height: 12px; border-radius: 50%; background: #f2f2f2; color: #111; font-size: 10px; font-weight: 700; line-height: 12px; text-align: center; }
.on em { bottom: 1px; }
.graph { width: 155px; height: 35px; }
.bat { width: 16px; height: 22px; }
.clock { justify-self: start; font-size: 13px; }
.tabbar { height: 45px; background: #0c0d11; display: grid; align-items: center; justify-items: center; color: #eee;
  grid-template-columns: 43px 1px 4.500px 220.500px 42px 1fr 39px 41px 29px 29px 29px; }
.vline { width: 1px; height: 44px; background: #3e4046; }
.ftab { width: 100%; height: 36px; border-radius: 4px; background: #42454c; display: flex; align-items: center; justify-content: space-between; padding: 0 11px 0 8px; font: 14px "Noto Sans", sans-serif; letter-spacing: .1px; }
.dot { width: 16px; height: 16px; border-radius: 50%; background: #363b4a; }
.blue { width: 19px; height: 19px; background: #2a76ee; color: #0b1222; display: grid; place-items: center; }
.toolbar { height: 39px; background: #42454c; display: grid; align-items: center; justify-items: center; color: #e6e6ea; padding: 0 6.500px 0 7px;
  grid-template-columns: 36px 36px 36px 36px var(--g) 1fr var(--g) 36px 36px 36px 36px; }
.dim { color: #8b8d93; }
.url { width: 100%; height: 32px; border-radius: 4px; background: #2f3034; display: grid; align-items: center; font: 13.800px "Noto Sans", sans-serif; grid-template-columns: 28px 26px 80px 1fr 28px 24px; padding-left: 8px; }
.marks { height: 33px; border-bottom: 1px solid #16171a; background: #42454c; display: grid; align-items: center; padding: 1px 0 0 13px; color: #e9e9ec; font: 13.900px "Noto Sans", sans-serif; grid-template-columns: 94px 96px 91px 109px 130px 103px 157px 1fr; }
.marks span { display: flex; align-items: center; gap: 4px; }
.wide { letter-spacing: .3px; }
.blk { color: #0a0a0a; }

/* SecurSEC page */
.site { font: 16px/18.200px "Liberation Sans", sans-serif; color: #000; }
.site header { height: 99px; background: #333; display: grid; place-items: center; padding-bottom: 2px; }
.site h1 { margin: 0; color: #fff; font-size: 32px; line-height: 38px; white-space: pre; }
.site nav { height: 39px; background: #444; display: flex; gap: 15px; justify-content: center; align-items: center; padding: 2px 9px 0 0; }
.site nav a { color: #00e; }
.site article { margin: 20.300px 20.300px 0 20.800px; border: 1px solid #ccc; padding: 10.200px 10.200px 9.200px; }
.site h2 { margin: 19.200px 0 22.200px; font-size: 24px; line-height: 27.200px; }
.site p { margin: 0 0 16.200px; }
.site h2, .site p { width: max-content; }

/* VMware Workstation window and its taskbar */
.work { display: flex; flex-direction: column; background: #fff; overflow: hidden; }
.title { height: 24px; border-top: 1px solid #000; border-bottom: 1px solid #e2e2e2; display: grid; align-items: center; grid-template-columns: 34px 310px 1fr 23px 24px 19px; padding-left: 3px; letter-spacing: -.28px; }
.gx { color: #555; }
.menubar { height: 34px; display: grid; align-items: center; letter-spacing: -.3px; grid-template-columns: 34px 36px 41px 34px 40px 37px 16px 23px 20px 13px 30px 17px 31px 30px 25px 17px 30px 30px 22px 8px 35px 12px 24px 20px; padding-left: 12px; }
.menubar > b { width: 1px; height: 19px; background: #cfcfcf; }
.menubar > svg, .hl svg { color: #555; }
.menubar .car { color: #777; }
.pause { width: 12px; height: 15px; border: solid #f26b21; border-width: 0 4.500px; }
.hl { width: 26px; height: 27px; background: #ececec; border: 1px solid #c9c9c9; border-radius: 3px; display: grid; place-items: center; }
.vm-b { height: 953px; border-top: 1px solid #666; }
.vm-b .site { border-right: 1px solid #999; height: 768px; }
.vmstatus { height: 21px; border-top: 1px solid #666; background: #e3e4e6; display: grid; align-items: center; color: #111; padding-left: 1px; letter-spacing: -.25px; grid-template-columns: 400px 1fr 21px 21px 21px 21px 22px 22px 20px 21px 17px 9px 38px; }
.vmstatus svg { color: #777; }
.vmstatus .off { color: #bdbdbd; }
.vmstatus b { width: 1px; height: 15px; background: #aaa; }
.bar2 { height: 48px; border-top: 1px solid #b0b0b0; background: #dbdbdb; display: grid; align-items: center; grid-template-columns: 33px 110px 369px 37px 224px repeat(14, 44px) 1fr 90px; padding-left: 17px; }
.bar2 > .s26 { margin-left: 1px; }
.st { align-items: flex-start; }
.g { color: #5a5a5a; }
.search { width: 218px; height: 31px; border-radius: 16px; background: #f5f5f5; border: 1px solid #cfcfcf; display: flex; align-items: center; gap: 10px; padding-left: 10px; font-size: 13px; letter-spacing: -.2px; color: #555; }
.search svg { color: #222; }
.ico { position: relative; width: 38px; height: 38px; display: grid; place-items: center; border-radius: 4px; }
.ico::after { left: 16px; bottom: -1px; }
.ico.act { background: #f0f0f0; } .ico.act::after { left: 11px; width: 16px; background: #0a6fc4; }
.ico.red { background: #e8aca8; box-shadow: 2px 0 0 #f0c9c6, 5px 0 0 #e4aaa6; } .ico.red::after { left: 8px; width: 22px; background: #bf2b22; }
```
